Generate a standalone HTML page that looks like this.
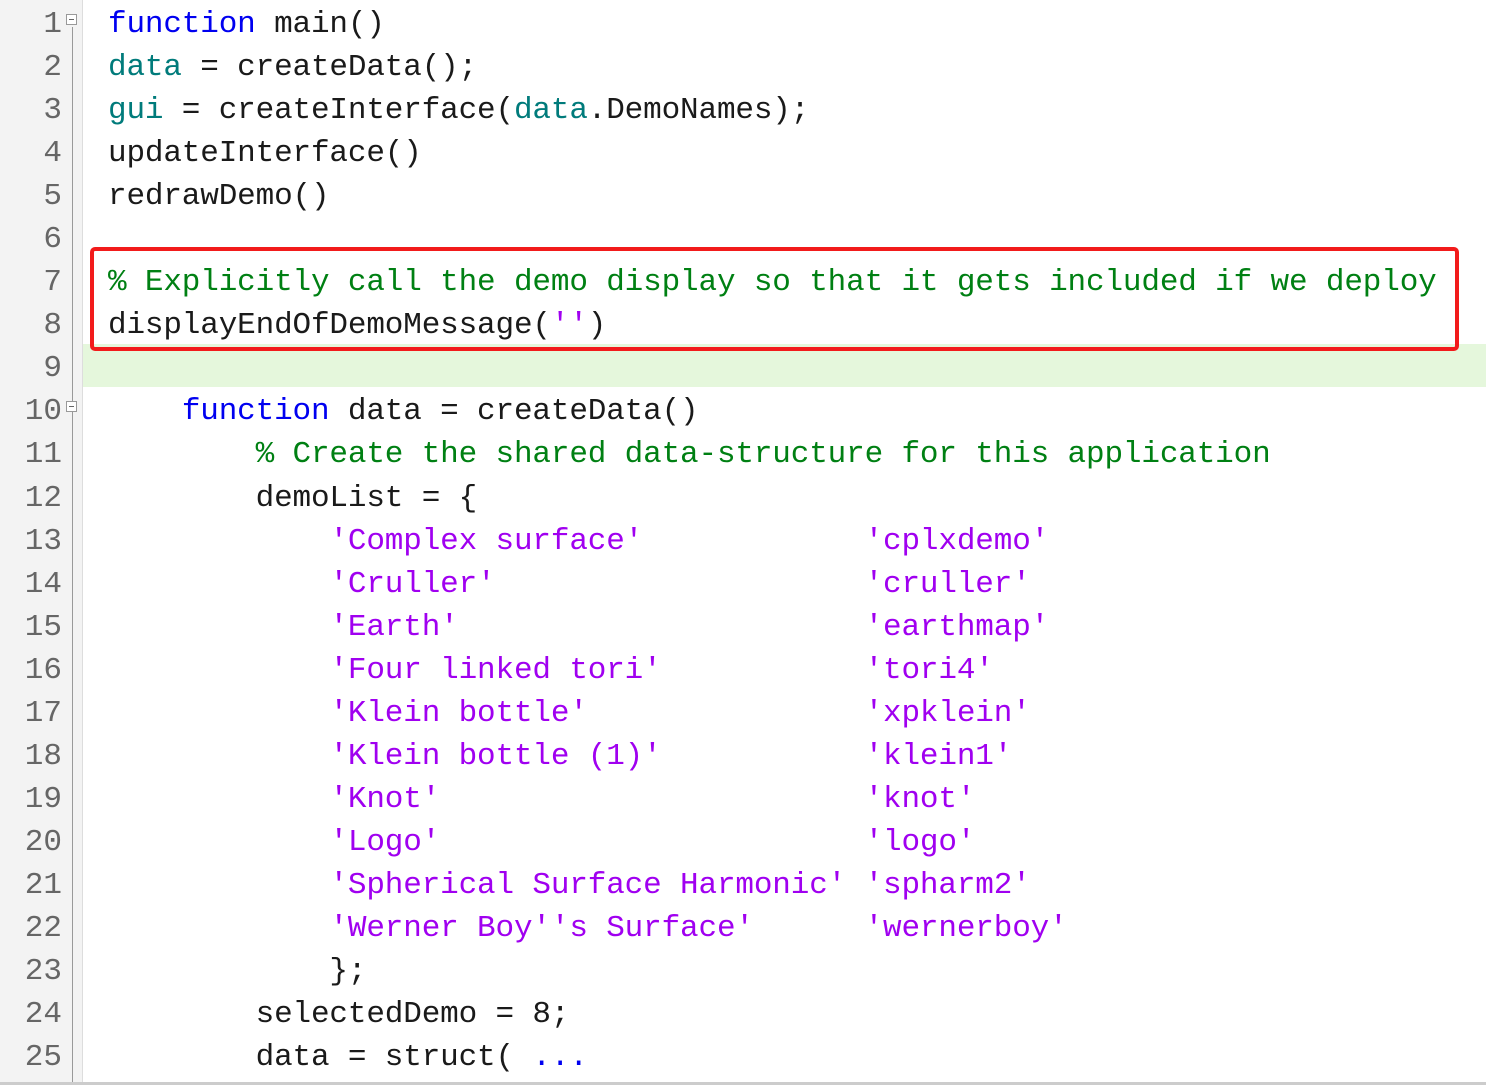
<!DOCTYPE html>
<html><head><meta charset="utf-8"><style>
html,body{margin:0;padding:0;background:#fff;width:1486px;height:1085px;overflow:hidden;position:relative}
.gut{position:absolute;left:0;top:0;width:82px;height:1083px;background:#f3f3f3;border-right:1px solid #ddd}
.vline{position:absolute;left:72px;top:27px;width:1px;height:1056px;background:#999}
.fold{position:absolute;left:66px;width:11px;height:11px;border:1px solid #999;background:#fff;box-sizing:border-box}
.fold:after{content:"";position:absolute;left:2px;top:4px;width:5px;height:1px;background:#666}
.hl{position:absolute;left:83px;top:344px;width:1403px;height:43px;background:#e5f7dc}
.box{position:absolute;left:90px;top:247px;width:1369px;height:104px;border:4px solid #f21b1b;border-radius:5px;box-sizing:border-box}
.bot{position:absolute;left:0;top:1082px;width:1486px;height:3px;background:#ccc}
pre{margin:0;position:absolute;top:3px;font-family:"Liberation Mono",monospace;font-size:31px;line-height:43.04px;letter-spacing:-0.15px}
.nums{left:0;width:62px;text-align:right;color:#666;letter-spacing:0}
.code{left:108px;color:#1a1a1a}
.k{color:#0000f0}.t{color:#007b7b}.c{color:#008013}.s{color:#a000f0}
</style></head><body>
<div class="gut"></div>
<div class="hl"></div>
<div class="vline"></div>
<div class="fold" style="top:14px"></div>
<div class="fold" style="top:401px"></div>
<div class="box"></div>
<pre class="nums">1
2
3
4
5
6
7
8
9
10
11
12
13
14
15
16
17
18
19
20
21
22
23
24
25</pre>
<pre class="code"><span class="k">function</span> main()
<span class="t">data</span> = createData();
<span class="t">gui</span> = createInterface(<span class="t">data</span>.DemoNames);
updateInterface()
redrawDemo()

<span class="c">% Explicitly call the demo display so that it gets included if we deploy</span>
displayEndOfDemoMessage(<span class="s">''</span>)

    <span class="k">function</span> data = createData()
        <span class="c">% Create the shared data-structure for this application</span>
        demoList = {
            <span class="s">'Complex surface'</span>            <span class="s">'cplxdemo'</span>
            <span class="s">'Cruller'</span>                    <span class="s">'cruller'</span>
            <span class="s">'Earth'</span>                      <span class="s">'earthmap'</span>
            <span class="s">'Four linked tori'</span>           <span class="s">'tori4'</span>
            <span class="s">'Klein bottle'</span>               <span class="s">'xpklein'</span>
            <span class="s">'Klein bottle (1)'</span>           <span class="s">'klein1'</span>
            <span class="s">'Knot'</span>                       <span class="s">'knot'</span>
            <span class="s">'Logo'</span>                       <span class="s">'logo'</span>
            <span class="s">'Spherical Surface Harmonic'</span> <span class="s">'spharm2'</span>
            <span class="s">'Werner Boy''s Surface'</span>      <span class="s">'wernerboy'</span>
            };
        selectedDemo = 8;
        data = struct( <span class="k">...</span></pre>
<div class="bot"></div>
</body></html>
